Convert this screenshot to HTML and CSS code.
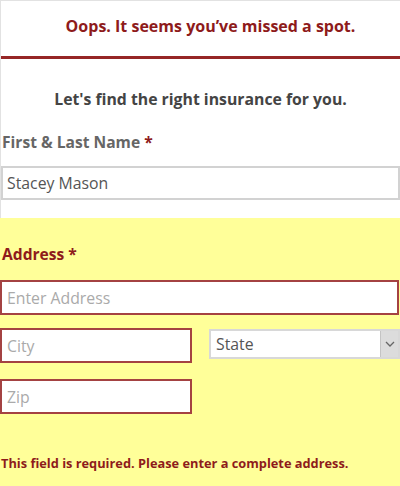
FILE: index.html
```html
<!DOCTYPE html>
<html lang="en">
<head>
<meta charset="utf-8">
<title>Insurance form</title>
<link rel="stylesheet" href="styles.css">
</head>
<body>
<div class="page">
  <header class="alert">
    <p class="alert-text">Oops. It seems you’ve missed a spot.</p>
  </header>
  <section class="intro">
    <h2 class="intro-title">Let's find the right insurance for you.</h2>
    <label class="label">First &amp; Last Name <span class="req">*</span></label>
    <div class="input input-ok">Stacey Mason</div>
  </section>
  <section class="address">
    <label class="label label-error">Address <span class="req">*</span></label>
    <div class="input input-error placeholder">Enter Address</div>
    <div class="row">
      <div class="input input-error placeholder half">City</div>
      <div class="select">
        <span class="select-value">State</span>
        <span class="select-btn">
          <svg width="10" height="6" viewBox="0 0 10 6"><path d="M1 1 L5 5 L9 1" fill="none" stroke="#666" stroke-width="1.3"/></svg>
        </span>
      </div>
    </div>
    <div class="input input-error placeholder half">Zip</div>
    <p class="error-msg">This field is required. Please enter a complete address.</p>
  </section>
</div>
</body>
</html>
```
FILE: styles.css
```css
* { box-sizing: border-box; }
html, body { margin: 0; padding: 0; background: #fff; }
body {
  font-family: "Open Sans", "Noto Sans", sans-serif;
  width: 400px;
  height: 486px;
  overflow: hidden;
}
.page {
  border-top: 1px solid #e2e2e2;
  border-left: 1px solid #e2e2e2;
  height: 486px;
  display: flex;
  flex-direction: column;
}
.alert {
  height: 58px;
  padding-bottom: 5px;
  border-bottom: 3px solid #962626;
  display: flex;
  align-items: center;
  justify-content: center;
}
.alert-text {
  margin: 0;
  padding-left: 20px;
  font-size: 16px;
  font-weight: 700;
  color: #8e1b1b;
}
.intro {
  padding: 28px 0 18px 0;
}
.intro-title {
  margin: 0 0 19px 0;
  text-align: center;
  font-size: 15.8px;
  font-weight: 700;
  color: #444;
  line-height: 24px;
}
.label {
  display: block;
  font-size: 15.6px;
  font-weight: 700;
  color: #666;
  line-height: 24px;
  padding-left: 1px;
  margin-bottom: 12px;
}
.req { color: #8e1b1b; }
.input {
  height: 34px;
  background: #fff;
  font-size: 15.8px;
  color: #555;
  display: flex;
  align-items: center;
  padding-left: 4px;
}
.input-ok {
  border: 2px solid #d2d2d2;
}
.input-error {
  border: 2px solid #a44242;
  height: 35px;
}
.placeholder { color: #aaa; }
.address {
  flex: 1;
  background: #ffff99;
  margin-left: -1px;
  padding: 24px 0 0 0;
}
.label-error {
  color: #8e1b1b;
  padding-left: 2px;
  margin-bottom: 14px;
}
.address .input { margin-right: 1px; padding-left: 5px; }
.row {
  display: flex;
  align-items: flex-start;
  justify-content: space-between;
  margin-top: 13px;
  margin-bottom: 16px;
}
.half { width: 192px; }
.select {
  width: 191px;
  height: 30px;
  margin-top: 1px;
  border: 2px solid #d8d8d8;
  background: #fff;
  display: flex;
  align-items: stretch;
}
.select-value {
  flex: 1;
  display: flex;
  align-items: center;
  padding-left: 5px;
  font-size: 15.8px;
  color: #555;
}
.select-btn {
  width: 18px;
  background: #dcdcdc;
  border-left: 1px solid #c4c4c4;
  display: flex;
  align-items: center;
  justify-content: center;
}
.error-msg {
  margin: 40px 0 0 1px;
  font-size: 12.8px;
  font-weight: 700;
  color: #8e1b1b;
}
```
